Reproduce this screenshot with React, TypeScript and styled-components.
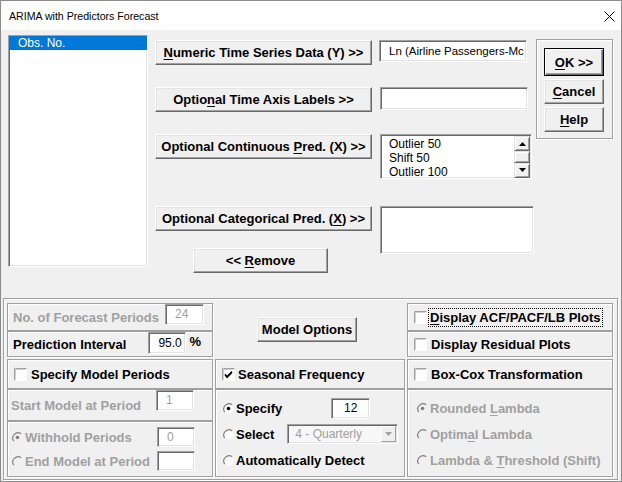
import React from "react";
import styled, { createGlobalStyle, css } from "styled-components";

const GlobalStyle = createGlobalStyle`
  html, body { margin: 0; padding: 0; background: #ffffff; }
  * { box-sizing: border-box; }
`;

const sunken = css`
  border-style: solid;
  border-width: 1px;
  border-color: #a0a0a0 #ffffff #ffffff #a0a0a0;
  box-shadow: inset 1px 1px 0 #696969, inset -1px -1px 0 #e3e3e3;
`;

const etched = css`
  border: 1px solid #a0a0a0;
  box-shadow: inset 1px 1px 0 #ffffff, 1px 1px 0 #ffffff;
`;

const Window = styled.div`
  width: 622px;
  height: 482px;
  border: 1px solid #8c8c8c;
  background: #f0f0f0;
  display: flex;
  flex-direction: column;
  overflow: hidden;
  font-family: "Liberation Sans", Arial, sans-serif;
  color: #000;
`;

const TitleBar = styled.div`
  height: 29px;
  flex: none;
  background: #ffffff;
  display: flex;
  align-items: center;
  justify-content: space-between;
  padding: 0 6px 0 8px;
  font-family: "Liberation Sans", Arial, sans-serif;
  font-size: 10.6px;
  color: #000;
`;

const CloseIcon = styled.svg`
  width: 11px;
  height: 11px;
  margin-top: 1px;
`;

const Body = styled.div`
  flex: 1;
  display: flex;
  flex-direction: column;
`;

const TopSection = styled.div`
  height: 268px;
  flex: none;
  display: flex;
  align-items: flex-start;
  padding: 5px 0 0 7px;
`;

const VarList = styled.div`
  ${sunken};
  width: 140px;
  height: 232px;
  background: #ffffff;
  flex: none;
`;

const ListItem = styled.div<{ $selected?: boolean }>`
  height: 14px;
  line-height: 14px;
  font-size: 12px;
  padding-left: 9px;
  white-space: nowrap;
  background: ${(p) => (p.$selected ? "#0078d7" : "transparent")};
  color: ${(p) => (p.$selected ? "#ffffff" : "#000")};
`;

const SelectGrid = styled.div`
  margin: 5px 0 0 7px;
  display: grid;
  grid-template-columns: 217px 155px;
  column-gap: 7px;
  grid-template-rows: 25px 22px 25px 22px 45px 27px 42px 6px 19px;
  grid-template-areas:
    "ybtn ybox"
    ". ."
    "lbtn lbox"
    ". ."
    "cbtn clist"
    ". ."
    "kbtn klist"
    "rem klist"
    "rem .";
`;

const CmdButton = styled.button<{ $area?: string; $w?: number; $h?: number; $default?: boolean }>`
  grid-area: ${(p) => p.$area || "auto"};
  width: ${(p) => (p.$w ? `${p.$w}px` : "100%")};
  height: ${(p) => p.$h || 25}px;
  align-self: start;
  justify-self: start;
  padding: 0;
  margin: 0;
  background: #f0f0f0;
  font-family: "Liberation Sans", Arial, sans-serif;
  font-weight: bold;
  font-size: 13px;
  color: #000;
  white-space: nowrap;
  border-style: solid;
  border-width: 1px;
  border-color: ${(p) => (p.$default ? "#000 #000 #000 #000" : "#ffffff #696969 #696969 #ffffff")};
  box-shadow: ${(p) =>
    p.$default
      ? "inset 1px 1px 0 #ffffff, inset -1px -1px 0 #696969, inset -2px -2px 0 #a0a0a0"
      : "inset -1px -1px 0 #a0a0a0, inset 1px 1px 0 #e3e3e3"};
  cursor: default;
`;

const RemoveButton = styled(CmdButton)`
  margin-left: 38px;
`;

const U = styled.span`
  text-decoration: underline;
  text-underline-offset: 2px;
`;

const TextBox = styled.div<{ $area?: string; $w: number; $h: number; $ml?: number; $disabled?: boolean; $align?: string }>`
  ${sunken};
  grid-area: ${(p) => p.$area || "auto"};
  width: ${(p) => p.$w}px;
  height: ${(p) => p.$h}px;
  margin-left: ${(p) => p.$ml || 0}px;
  align-self: start;
  background: #ffffff;
  font-size: 12px;
  line-height: ${(p) => p.$h - 4}px;
  padding: 1px 4px 0 9px;
  text-align: ${(p) => p.$align || "left"};
  color: ${(p) => (p.$disabled ? "#a0a0a0" : "#000")};
  white-space: nowrap;
  overflow: hidden;
  flex: none;
`;

const SeriesBox = styled(TextBox)`
  font-size: 11.5px;
  padding: 1px 2px 0 9px;
`;

const CenterBox = styled(TextBox)`
  padding: 1px 4px 0 4px;
  text-align: center;
`;

const PredList = styled.div<{ $area: string; $w: number; $h: number }>`
  ${sunken};
  grid-area: ${(p) => p.$area};
  width: ${(p) => p.$w}px;
  height: ${(p) => p.$h}px;
  margin-left: 1px;
  background: #ffffff;
  display: flex;
  padding: 2px 1px 0 0;
`;

const PredItems = styled.div`
  flex: 1;
  padding-left: 8px;
  font-size: 12px;
  line-height: 14px;
`;

const ScrollBar = styled.div`
  width: 16px;
  display: flex;
  flex-direction: column;
  margin-top: -1px;
`;

const ScrollBtn = styled.div<{ $h: number }>`
  height: ${(p) => p.$h}px;
  background: #f0f0f0;
  border-style: solid;
  border-width: 1px;
  border-color: #e3e3e3 #696969 #696969 #e3e3e3;
  box-shadow: inset 1px 1px 0 #ffffff, inset -1px -1px 0 #a0a0a0;
  display: flex;
  align-items: center;
  justify-content: center;
`;

const RightFrame = styled.div`
  ${etched};
  margin: 4px 0 0 2px;
  width: 77px;
  height: 100px;
  display: flex;
  flex-direction: column;
  gap: 3px;
  padding: 8px 0 0 7px;
`;

const GroupBox = styled.div`
  ${etched};
  margin-left: 2px;
  width: 615px;
  height: 182px;
  padding: 4px 0 0 3px;
  display: grid;
  grid-template-columns: 206px 194px 206px;
  align-items: start;
`;

const Column = styled.div`
  display: flex;
  flex-direction: column;
`;

const Frame = styled.div<{ $h: number; $mt?: number; $pl?: number; $mx?: number; $pr?: number }>`
  ${etched};
  height: ${(p) => p.$h}px;
  margin-top: ${(p) => p.$mt || 0}px;
  margin-left: ${(p) => p.$mx || 0}px;
  margin-right: ${(p) => p.$mx || 0}px;
  padding-left: ${(p) => p.$pl ?? 5}px;
  padding-right: ${(p) => p.$pr || 0}px;
  display: flex;
  align-items: center;
`;

const OptionFrame = styled.div<{ $h: number; $mx?: number; $pl?: number }>`
  ${etched};
  height: ${(p) => p.$h}px;
  margin: 0 ${(p) => p.$mx || 0}px;
  padding: 6px 0 0 ${(p) => p.$pl ?? 5}px;
  display: grid;
  grid-template-rows: 24px 28px 24px;
  align-items: center;
`;

const StackFrame = styled.div`
  ${etched};
  height: 56px;
  padding: 3px 17px 0 3px;
  display: grid;
  grid-template-rows: 24px 24px;
  align-items: center;
`;

const Row = styled.div`
  display: flex;
  align-items: center;
`;

const Label = styled.span<{ $disabled?: boolean; $ml?: number }>`
  font-size: 13px;
  font-weight: bold;
  white-space: nowrap;
  margin-left: ${(p) => p.$ml || 0}px;
  margin-right: auto;
  color: ${(p) => (p.$disabled ? "#a0a0a0" : "#000")};
`;

const FocusLabel = styled(Label)`
  outline: 1px dotted #000;
  outline-offset: 0px;
  padding: 1px 2px 1px 1px;
  margin-left: 2px;
`;

const Percent = styled.span`
  font-size: 13px;
  font-weight: bold;
  margin: 0 11px 6px 3px;
  align-self: center;
`;

const ModelArea = styled.div`
  height: 56px;
  padding: 14px 0 0 44px;
`;

const Combo = styled.div`
  ${sunken};
  width: 111px;
  height: 20px;
  background: #f7f7f7;
  display: flex;
  align-items: center;
  font-size: 12px;
  color: #a0a0a0;
  padding: 0 1px 0 7px;
  margin-left: 13px;
`;

const ComboBtn = styled.div`
  width: 15px;
  height: 16px;
  margin-left: auto;
  background: #f0f0f0;
  border-style: solid;
  border-width: 1px;
  border-color: #ffffff #a0a0a0 #a0a0a0 #ffffff;
  display: flex;
  align-items: center;
  justify-content: center;
`;

const BoxIcon = styled.svg`
  flex: none;
  width: 13px;
  height: 13px;
`;

function CheckBox({ checked }: { checked?: boolean }) {
  return (
    <BoxIcon viewBox="0 0 13 13">
      <rect x="0" y="0" width="13" height="13" fill="#ffffff" />
      <path d="M0.5 12.5 V0.5 H12.5" fill="none" stroke="#a0a0a0" />
      <path d="M1.5 11.5 V1.5 H11.5" fill="none" stroke="#d0d0d0" />
      {checked && <path d="M3 6 L5 8.5 L10 3.5 M3 7 L5 9.5 L10 4.5" fill="none" stroke="#000" strokeWidth="1.2" />}
    </BoxIcon>
  );
}

function Radio({ checked, disabled }: { checked?: boolean; disabled?: boolean }) {
  return (
    <BoxIcon viewBox="0 0 13 13">
      <circle cx="6.5" cy="6.5" r="5" fill={disabled ? "#f0f0f0" : "#ffffff"} />
      <path d="M10.2 2.8 A5.3 5.3 0 0 0 2.8 10.2" fill="none" stroke="#808080" strokeWidth="1.2" />
      {checked && <circle cx="6.5" cy="6.5" r="1.8" fill={disabled ? "#808080" : "#000"} />}
    </BoxIcon>
  );
}

function Arrow({ dir, color = "#000" }: { dir: "up" | "down"; color?: string }) {
  return (
    <svg width="7" height="4" viewBox="0 0 7 4">
      {dir === "up" ? <path d="M0 4 L3.5 0 L7 4 Z" fill={color} /> : <path d="M0 0 L7 0 L3.5 4 Z" fill={color} />}
    </svg>
  );
}

export default function App() {
  return (
    <>
      <GlobalStyle />
      <Window>
        <TitleBar>
          <span>ARIMA with Predictors Forecast</span>
          <CloseIcon viewBox="0 0 11 11">
            <path d="M0.5 0.5 L10.5 10.5 M10.5 0.5 L0.5 10.5" stroke="#000" strokeWidth="1" />
          </CloseIcon>
        </TitleBar>
        <Body>
          <TopSection>
            <VarList>
              <ListItem $selected>Obs. No.</ListItem>
            </VarList>
            <SelectGrid>
              <CmdButton $area="ybtn">
                <U>N</U>umeric Time Series Data (Y) &gt;&gt;
              </CmdButton>
              <SeriesBox $area="ybox" $w={148} $h={22}>
                Ln (Airline Passengers-Mc
              </SeriesBox>
              <CmdButton $area="lbtn">
                Optio<U>n</U>al Time Axis Labels &gt;&gt;
              </CmdButton>
              <TextBox $area="lbox" $w={148} $h={23} $ml={1} />
              <CmdButton $area="cbtn">
                Optional Continuous <U>P</U>red. (X) &gt;&gt;
              </CmdButton>
              <PredList $area="clist" $w={152} $h={45}>
                <PredItems>
                  <div>Outlier 50</div>
                  <div>Shift 50</div>
                  <div>Outlier 100</div>
                </PredItems>
                <ScrollBar>
                  <ScrollBtn $h={16}>
                    <Arrow dir="up" />
                  </ScrollBtn>
                  <ScrollBtn $h={12} />
                  <ScrollBtn $h={16}>
                    <Arrow dir="down" />
                  </ScrollBtn>
                </ScrollBar>
              </PredList>
              <CmdButton $area="kbtn">
                Optional Categorical Pred. (<U>X</U>) &gt;&gt;
              </CmdButton>
              <PredList $area="klist" $w={154} $h={48} />
              <RemoveButton $area="rem" $w={135}>
                &lt;&lt; <U>R</U>emove
              </RemoveButton>
            </SelectGrid>
            <RightFrame>
              <CmdButton $w={60} $h={28} $default>
                <U>O</U>K &gt;&gt;
              </CmdButton>
              <CmdButton $w={60} $h={25}>
                <U>C</U>ancel
              </CmdButton>
              <CmdButton $w={60} $h={25}>
                <U>H</U>elp
              </CmdButton>
            </RightFrame>
          </TopSection>

          <GroupBox>
            <Column>
              <Frame $h={28} $pr={8}>
                <Label $disabled>No. of Forecast Periods</Label>
                <TextBox $w={39} $h={21} $disabled>
                  24
                </TextBox>
              </Frame>
              <Frame $h={26}>
                <Label>Prediction Interval</Label>
                <TextBox $w={38} $h={22} $align="right">
                  95.0
                </TextBox>
                <Percent>%</Percent>
              </Frame>
              <Frame $h={30} $mt={2} $pl={6}>
                <CheckBox />
                <Label $ml={4}>Specify Model Periods</Label>
              </Frame>
              <Frame $h={32} $pl={3} $pr={18}>
                <Label $disabled>Start Model at Period</Label>
                <TextBox $w={38} $h={21} $disabled>
                  1
                </TextBox>
              </Frame>
              <StackFrame>
                <Row>
                  <Radio checked disabled />
                  <Label $disabled $ml={1}>
                    Withhold Periods
                  </Label>
                  <TextBox $w={38} $h={20} $disabled>
                    0
                  </TextBox>
                </Row>
                <Row>
                  <Radio disabled />
                  <Label $disabled $ml={1}>
                    End Model at Period
                  </Label>
                  <TextBox $w={38} $h={20} />
                </Row>
              </StackFrame>
            </Column>

            <Column>
              <ModelArea>
                <CmdButton $w={100} $h={25}>
                  Model Options
                </CmdButton>
              </ModelArea>
              <Frame $h={30} $mx={2} $pl={6}>
                <CheckBox checked />
                <Label $ml={3}>Seasonal Frequency</Label>
              </Frame>
              <OptionFrame $h={88} $mx={2} $pl={6}>
                <Row>
                  <Radio checked />
                  <Label $ml={1} style={{ marginRight: 0 }}>
                    Specify
                  </Label>
                  <CenterBox $w={39} $h={21} $ml={49}>
                    12
                  </CenterBox>
                </Row>
                <Row>
                  <Radio />
                  <Label $ml={1} style={{ marginRight: 0 }}>
                    Select
                  </Label>
                  <Combo>
                    4 - Quarterly
                    <ComboBtn>
                      <Arrow dir="down" color="#a0a0a0" />
                    </ComboBtn>
                  </Combo>
                </Row>
                <Row>
                  <Radio />
                  <Label $ml={1}>Automatically Detect</Label>
                </Row>
              </OptionFrame>
            </Column>

            <Column>
              <Frame $h={28} $pl={6}>
                <CheckBox />
                <FocusLabel>
                  <U>D</U>isplay ACF/PACF/LB Plots
                </FocusLabel>
              </Frame>
              <Frame $h={26} $pl={6}>
                <CheckBox />
                <Label $ml={4}>Display Residual Plots</Label>
              </Frame>
              <Frame $h={30} $mt={2} $pl={6}>
                <CheckBox />
                <Label $ml={4}>Box-Cox Transformation</Label>
              </Frame>
              <OptionFrame $h={88} $pl={8}>
                <Row>
                  <Radio checked disabled />
                  <Label $disabled $ml={1}>
                    Rounded <U>L</U>ambda
                  </Label>
                </Row>
                <Row>
                  <Radio disabled />
                  <Label $disabled $ml={1}>
                    Optim<U>a</U>l Lambda
                  </Label>
                </Row>
                <Row>
                  <Radio disabled />
                  <Label $disabled $ml={1}>
                    Lambda &amp; <U>T</U>hreshold (Shift)
                  </Label>
                </Row>
              </OptionFrame>
            </Column>
          </GroupBox>
        </Body>
      </Window>
    </>
  );
}
